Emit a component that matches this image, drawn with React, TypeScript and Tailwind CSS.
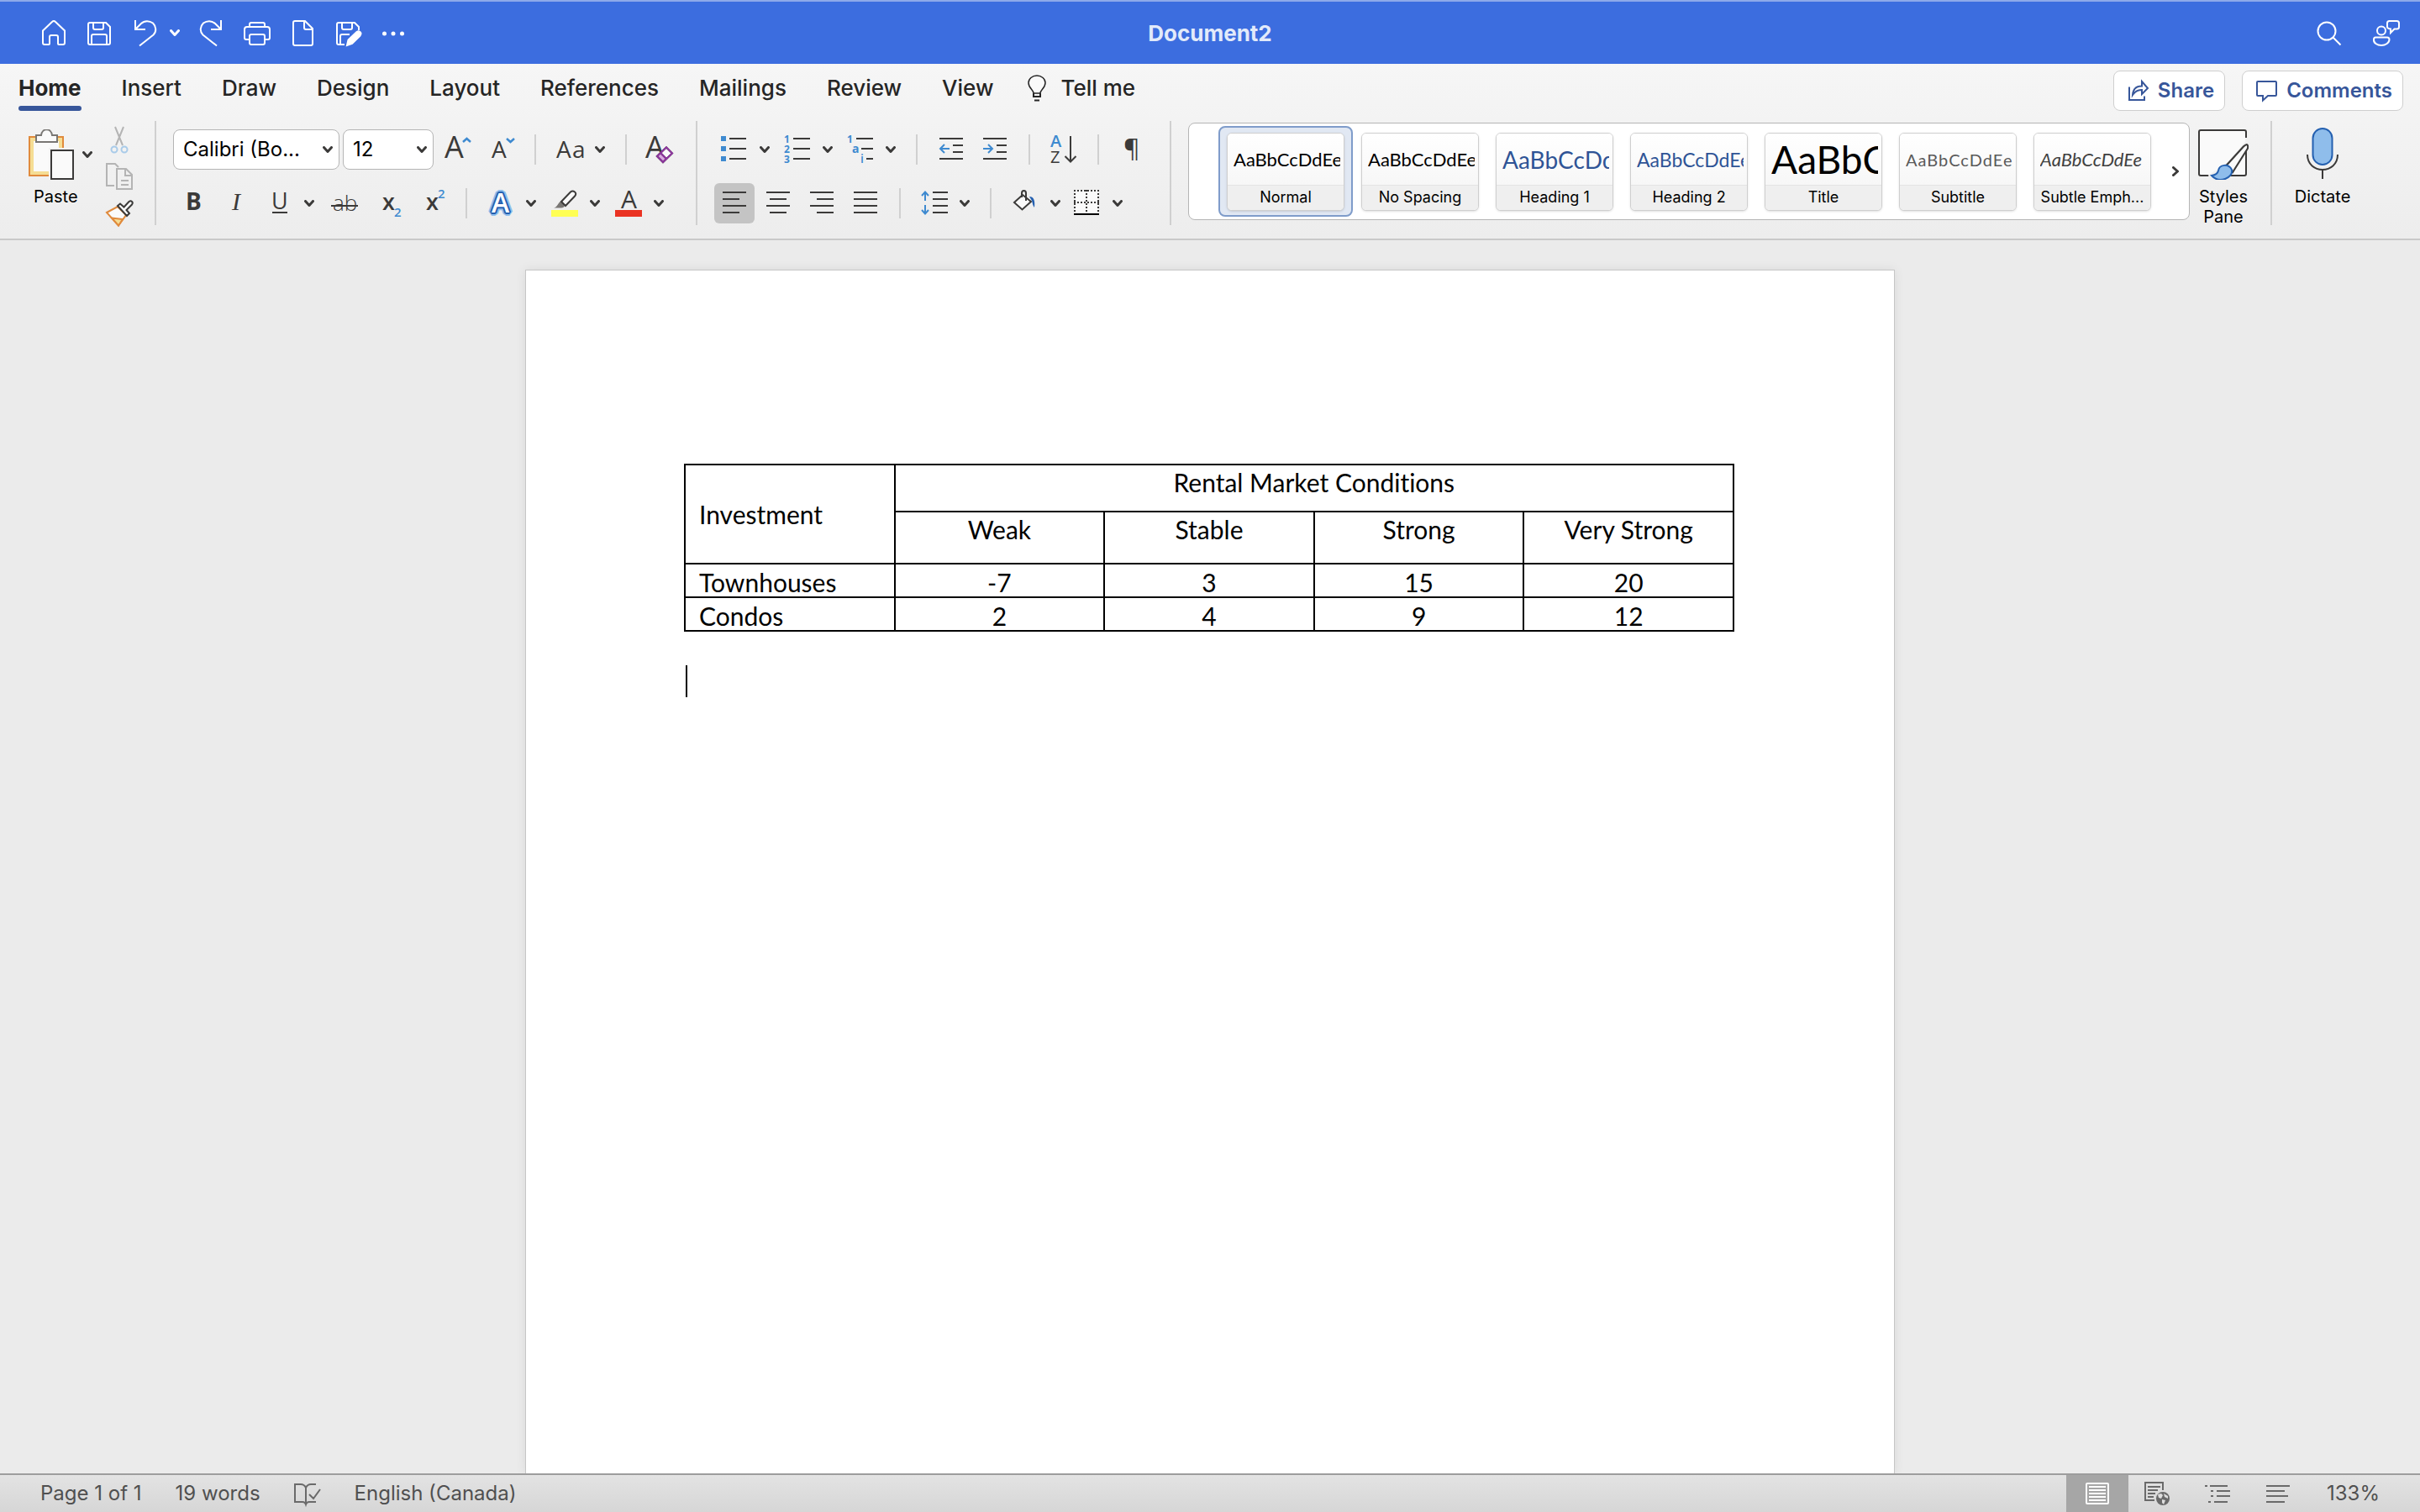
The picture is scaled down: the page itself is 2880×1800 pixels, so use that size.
import { clsx } from "clsx";
import { ReactNode, useState } from "react";

const TABS = [
  "Home",
  "Insert",
  "Draw",
  "Design",
  "Layout",
  "References",
  "Mailings",
  "Review",
  "View",
];

const STYLES = [
  { label: "Normal", sample: "text-[22px] text-black" },
  { label: "No Spacing", sample: "text-[22px] text-black" },
  { label: "Heading 1", sample: "text-[28px] text-[#2f5496]" },
  { label: "Heading 2", sample: "text-[23px] text-[#2f5496]" },
  { label: "Title", sample: "text-[46px] text-black" },
  { label: "Subtitle", sample: "text-[20px] tracking-wider text-[#5a5a5a]" },
  { label: "Subtle Emph...", sample: "text-[22px] italic text-[#404040]" },
];

const CONDITIONS = ["Weak", "Stable", "Strong", "Very Strong"];

const INVESTMENTS = [
  { name: "Townhouses", values: [-7, 3, 15, 20] },
  { name: "Condos", values: [2, 4, 9, 12] },
];

interface IconProps {
  children: ReactNode;
  className?: string;
}

function Icon({ children, className }: IconProps) {
  return (
    <svg
      aria-hidden="true"
      className={clsx("size-8 shrink-0 overflow-visible", className)}
      fill="none"
      stroke="currentColor"
      strokeWidth="2"
      viewBox="0 0 32 32"
    >
      {children}
    </svg>
  );
}

interface GlyphProps {
  children: string;
  className?: string;
  fill?: string;
  size: number;
  x: number;
  y: number;
}

// Letters that are part of an icon
function Glyph({ children, className, fill = "#3b3a39", size, x, y }: GlyphProps) {
  return (
    <text
      className={clsx("font-['Open_Sans',sans-serif]", className)}
      fill={fill}
      fontSize={size}
      stroke="none"
      x={x}
      y={y}
    >
      {children}
    </text>
  );
}

function Chevron({ className }: { className?: string }) {
  return (
    <svg
      aria-hidden="true"
      className={clsx("h-2 w-3 shrink-0", className)}
      fill="none"
      stroke="currentColor"
      strokeLinecap="round"
      strokeLinejoin="round"
      strokeWidth="3"
      viewBox="0 0 12 8"
    >
      <path d="M1.500 1.500 6 6.500l4.500-5" />
    </svg>
  );
}

function Tool({ children, label }: { children: ReactNode; label: string }) {
  return (
    <button aria-label={label} className="flex shrink-0 items-center" type="button">
      <Icon>{children}</Icon>
    </button>
  );
}

function MenuTool({ children, label }: { children: ReactNode; label: string }) {
  return (
    <button
      aria-label={label}
      className="flex shrink-0 items-center gap-3.5"
      type="button"
    >
      <Icon>{children}</Icon>
      <Chevron />
    </button>
  );
}

function Divider() {
  return <div className="mx-6 h-9 w-0.5 shrink-0 bg-[#d0d0d0]" />;
}

function GroupDivider() {
  return <div className="h-[124px] w-0.5 shrink-0 bg-[#d0d0d0]" />;
}

function TitleBar() {
  return (
    <header className="grid h-[76px] shrink-0 grid-cols-[1fr_auto_1fr] items-center border-t-2 border-[#8ea9ea] bg-[#3c6ddf] text-white">
      <div className="flex items-center gap-[22px] pl-12">
        <Tool label="Home">
          <path d="M3 13.500 14 3q2-2 4 0l11 10.500V28q0 2-2 2h-5q-1 0-1-1v-8q0-2-2-2h-6q-2 0-2 2v8q0 1-1 1H5q-2 0-2-2z" />
        </Tool>
        <Tool label="Save">
          <path d="M5 4h19l5 5v19q0 2-2 2H5q-2 0-2-2V6q0-2 2-2z" />
          <path d="M9 4v6q0 2 2 2h8q2 0 2-2V4M7 30V20q0-2 2-2h14q2 0 2 2v10" />
        </Tool>
        <MenuTool label="Undo">
          <path d="M5 1v11h12M5 12l7-7c4-4 10-3.500 14-.5 4 4 4.500 10 .5 14L10 31.500" />
        </MenuTool>
        <Tool label="Redo">
          <path
            d="M5 1v11h12M5 12l7-7c4-4 10-3.500 14-.5 4 4 4.500 10 .5 14L10 31.500"
            transform="matrix(-1 0 0 1 32 0)"
          />
        </Tool>
        <Tool label="Print">
          <path d="M7 9V6q0-2 2-2h14q2 0 2 2v3" />
          <path d="M7 24H3q-2 0-2-2V12q0-3 3-3h24q3 0 3 3v10q0 2-2 2h-4" />
          <rect height="12" rx="2" width="18" x="7" y="18" />
        </Tool>
        <Tool label="New document">
          <path d="M7 2h12l9 9v18q0 2-2 2H7q-2 0-2-2V4q0-2 2-2z" />
          <path d="M18 2v8q0 2 2 2h8" />
        </Tool>
        <Tool label="Save as">
          <path d="M12 30H5q-2 0-2-2V6q0-2 2-2h19l5 5v4" />
          <path d="M9 4v6q0 2 2 2h8q2 0 2-2V4M7 30V20q0-2 2-2h9" />
          <path
            d="m15 31 1.500-6.500L26.500 15q2-1.500 4 0t0 4.500L21 29z"
            fill="currentColor"
          />
        </Tool>
        <Tool label="More commands">
          <g fill="currentColor" stroke="none">
            <circle cx="5.500" cy="17" r="2.500" />
            <circle cx="16" cy="17" r="2.500" />
            <circle cx="26.500" cy="17" r="2.500" />
          </g>
        </Tool>
      </div>
      <h1 className="pt-0.5 text-[26px] leading-8 font-bold text-[#e2eafa]">
        Document2
      </h1>
      <div className="flex items-center justify-end gap-9 pr-6">
        <Tool label="Search">
          <circle cx="13" cy="14" r="10.500" />
          <path d="m20.500 21.500 9 9" />
        </Tool>
        <Tool label="Account">
          <circle cx="10" cy="13.500" r="5" />
          <path d="M3 21.500h14q2.500 0 2.500 2.500c0 4-4.500 7-9.500 7S.5 28 1 24q0-2.500 2-2.500z" />
          <path d="M19.500 2h9q2.500 0 2.500 2.500V9q0 2.500-2.500 2.500h-3L21 16v-4.500q-4-.5-4-2.500V4.500Q17 2 19.500 2z" />
        </Tool>
      </div>
    </header>
  );
}

function Tabs() {
  const [active, setActive] = useState("Home");

  return (
    <div className="flex h-16 items-start justify-between pr-5 pl-[22px]">
      <nav className="flex h-14 gap-12">
        {TABS.map((tab) => (
          <button
            className={clsx(
              "relative pt-0.5 text-[26px] leading-8 text-[#252525]",
              tab === active ? "font-bold" : "font-medium",
            )}
            key={tab}
            onClick={() => setActive(tab)}
            type="button"
          >
            {tab}
            {tab === active && (
              <span className="absolute inset-x-0 bottom-0 h-1.5 rounded-full bg-[#37569a]" />
            )}
          </button>
        ))}
        <button
          className="-ml-3 flex items-center gap-3 pt-0.5 text-[26px] leading-8 font-medium text-[#252525]"
          type="button"
        >
          <Icon>
            <path
              d="M12 22c0-4-6-6-6-12.500a10 8.500 0 0 1 20 0C26 16 20 18 20 22z"
              fill="#fafafa"
              strokeWidth="1.500"
            />
            <path d="M12 22v4h8v-4M13 30.500h6" />
          </Icon>
          Tell me
        </button>
      </nav>
      <div className="flex h-14 items-end gap-5">
        <button
          className="flex h-12 items-center gap-2 rounded-lg border border-[#cfcfcf] bg-white px-3 text-[24px] font-semibold text-[#37569a]"
          type="button"
        >
          <Icon>
            <path d="M6 11.500V27h18v-4.500M10 21c.5-7 4.500-10.500 11-10.500V5l7 8-7 7v-5c-4.500 0-8 1.500-11 6z" />
          </Icon>
          Share
        </button>
        <button
          className="flex h-12 items-center gap-2 rounded-lg border border-[#cfcfcf] bg-white px-3 text-[24px] font-semibold text-[#37569a]"
          type="button"
        >
          <Icon>
            <path d="M6 5h21q1 0 1 1v15q0 1-1 1h-9l-6 5.500V22H6q-1 0-1-1V6q0-1 1-1z" />
          </Icon>
          Comments
        </button>
      </div>
    </div>
  );
}

function ClipboardGroup() {
  return (
    <div className="flex shrink-0 gap-4 pr-[26px] pl-[34px]">
      <button className="flex flex-col items-start gap-2 pt-2.5" type="button">
        <span className="flex items-center gap-2.5">
          <svg
            aria-hidden="true"
            className="h-[60px] w-[54px]"
            fill="none"
            strokeWidth="2"
            viewBox="0 0 54 60"
          >
            <path d="M1 9h40v46H1z" fill="#f5dd94" stroke="#e08a3c" />
            <path d="M6 14h30v36H6z" fill="#fafafa" />
            <path
              d="M9 7h6c1-9 12-9 13 0h6v8H9z"
              fill="#fafafa"
              stroke="#797774"
            />
            <path d="M24 22h30v38H24z" fill="#f2f2f2" />
            <path d="M27 25h26v34H27z" fill="#fafafa" stroke="#3b3a39" />
          </svg>
          <Chevron />
        </span>
        <span className="pl-1.5 text-[20px] leading-6 text-black">Paste</span>
      </button>
      <div className="flex flex-col gap-3 pt-1.5">
        <Tool label="Cut">
          <g stroke="#b4b4b4">
            <path d="m11 1 9 22M21 1l-9 22" />
          </g>
          <g stroke="#a9cbe9">
            <circle cx="10" cy="28" r="3.500" />
            <circle cx="22" cy="28" r="3.500" />
          </g>
        </Tool>
        <Tool label="Copy">
          <g stroke="#b4b4b4">
            <path d="M10 27H1V1h10l4 4" />
            <path d="M13 7h11l7 7v17H13zM23 7v8h8M18 21h9M18 26h9" />
          </g>
        </Tool>
        <Tool label="Format painter">
          <path d="M1 15 14 8l10 10-9 12.500z" fill="#fafafa" stroke="#e08a3c" />
          <path d="m7 21.500 13 1.500-5 7.500z" fill="#f5dd94" stroke="#e08a3c" />
          <path
            d="m14 7 3-2.500 4.500 4 6-6.500q2-1.500 3.500 0t0 3.500l-6.500 6.500 3.500 4-3 3z"
            fill="#fafafa"
            stroke="#3b3a39"
          />
        </Tool>
      </div>
    </div>
  );
}

interface PickerProps {
  className: string;
  label: string;
  value: string;
}

function Picker({ className, label, value }: PickerProps) {
  return (
    <label className={clsx("relative flex items-center", className)}>
      <span className="sr-only">{label}</span>
      <select
        className="h-12 w-full appearance-none rounded-lg border border-[#b5b5b5] bg-white px-[11px] text-[24px] text-black"
        defaultValue={value}
      >
        <option>{value}</option>
      </select>
      <Chevron className="pointer-events-none absolute right-2" />
    </label>
  );
}

function FontGroup() {
  return (
    <div className="flex shrink-0 flex-col gap-4 pt-2.5 pr-[26px] pl-5">
      <div className="flex h-12 items-center">
        <div className="flex gap-1 pr-3">
          <Picker className="w-[198px]" label="Font" value="Calibri (Bo..." />
          <Picker className="w-[108px]" label="Font size" value="12" />
        </div>
        <div className="flex gap-5">
          <Tool label="Increase font size">
            <Glyph size={36} x={1} y={26}>
              A
            </Glyph>
            <path d="m23 7 4.500-4L32 7" stroke="#3e8ad0" strokeWidth="2.500" />
          </Tool>
          <Tool label="Decrease font size">
            <Glyph size={28} x={5} y={26}>
              A
            </Glyph>
            <path d="m23 3 4.500 4L32 3" stroke="#3e8ad0" strokeWidth="2.500" />
          </Tool>
        </div>
        <Divider />
        <MenuTool label="Change case">
          <Glyph size={28} x={0} y={26}>
            A
          </Glyph>
          <Glyph size={28} x={19} y={26}>
            a
          </Glyph>
        </MenuTool>
        <Divider />
        <Tool label="Clear formatting">
          <Glyph size={36} x={-2} y={26}>
            A
          </Glyph>
          <path
            d="M14 25 24 15l6 6-10 9z"
            fill="#fafafa"
            stroke="#f1f1f1"
            strokeWidth="4"
          />
          <path d="m12 24 11-10.500 7 7L19 31z" fill="#fafafa" />
          <path d="m12 24 4-4 7 7-4 4z" fill="#d9a8e0" />
          <path d="m12 24 11-10.500 7 7L19 31zM16 20l7 7" stroke="#8f36a0" />
        </Tool>
      </div>
      <div className="flex h-12 items-center pl-1.5">
        <div className="flex items-center gap-5">
          <Tool label="Bold">
            <Glyph className="font-bold" size={28} x={9} y={24}>
              B
            </Glyph>
          </Tool>
          <Tool label="Italic">
            <text
              className="font-['Liberation_Serif',serif] italic"
              fill="#3b3a39"
              fontSize="30"
              stroke="none"
              x="12"
              y="24"
            >
              I
            </text>
          </Tool>
          <MenuTool label="Underline">
            <Glyph size={27} x={7} y={23}>
              U
            </Glyph>
            <path d="M8 27h18" stroke="#3b3a39" />
          </MenuTool>
          <Tool label="Strikethrough">
            <Glyph className="font-light" size={26} x={2} y={25}>
              ab
            </Glyph>
            <path d="M0 19h32" stroke="#3b3a39" />
          </Tool>
          <Tool label="Subscript">
            <Glyph className="font-semibold" size={27} x={9} y={24}>
              x
            </Glyph>
            <Glyph className="font-semibold" fill="#3e8ad0" size={15} x={23} y={32}>
              2
            </Glyph>
          </Tool>
          <Tool label="Superscript">
            <Glyph className="font-semibold" size={27} x={9} y={24}>
              x
            </Glyph>
            <Glyph className="font-semibold" fill="#3e8ad0" size={15} x={23} y={10}>
              2
            </Glyph>
          </Tool>
        </div>
        <Divider />
        <div className="flex items-center gap-[18px]">
          <MenuTool label="Text effects">
            <text
              className="font-['Open_Sans',sans-serif] font-semibold"
              fill="#fff"
              fontSize="32"
              stroke="#8fbdeb"
              strokeLinejoin="bevel"
              strokeWidth="8"
              x="5"
              y="27"
            >
              A
            </text>
            <text
              className="font-['Open_Sans',sans-serif] font-semibold"
              fill="#fff"
              fontSize="32"
              stroke="#2460b0"
              strokeLinejoin="bevel"
              strokeWidth="4"
              x="5"
              y="27"
            >
              A
            </text>
            <Glyph className="font-semibold" fill="#fff" size={32} x={5} y={27}>
              A
            </Glyph>
          </MenuTool>
          <MenuTool label="Highlight colour">
            <path d="M3 21.500c5-1 5-7 9-8l4 4c0 3-2 4-4 4z" fill="#797774" stroke="none" />
            <path
              d="m12 14 11-11.500q2.500-2 5 0t0 5L17 19z"
              fill="#fafafa"
              stroke="#3b3a39"
            />
            <path d="M0 24h32v8H0z" fill="#ffff54" stroke="none" />
          </MenuTool>
          <MenuTool label="Font colour">
            <Glyph size={30} x={7} y={22}>
              A
            </Glyph>
            <path d="M0 24h32v8H0z" fill="#ea3323" stroke="none" />
          </MenuTool>
        </div>
      </div>
    </div>
  );
}

const ALIGNMENTS = [
  { label: "Align left", path: "M2 7h28M2 15h20M2 23h28M2 31h20" },
  { label: "Centre", path: "M2 7h28M6 15h20M2 23h28M6 31h20" },
  { label: "Align right", path: "M2 7h28M10 15h20M2 23h28M10 31h20" },
  { label: "Justify", path: "M2 7h28M2 15h28M2 23h28M2 31h28" },
];

function ParagraphGroup() {
  const [alignment, setAlignment] = useState("Align left");

  return (
    <div className="flex shrink-0 flex-col gap-4 pt-2.5 pr-7 pl-5">
      <div className="flex h-12 items-center pl-2">
        <div className="flex items-center gap-[17px]">
          <MenuTool label="Bulleted list">
            <path
              d="M0 0h6v6H0zM0 12h6v6H0zM0 24h6v6H0z"
              fill="#3e8ad0"
              stroke="none"
            />
            <path d="M10 3h20M10 15h20M10 27h20" />
          </MenuTool>
          <MenuTool label="Numbered list">
            <Glyph className="font-bold" fill="#3e8ad0" size={12} x={0} y={8}>
              1
            </Glyph>
            <Glyph className="font-bold" fill="#3e8ad0" size={12} x={0} y={20}>
              2
            </Glyph>
            <Glyph className="font-bold" fill="#3e8ad0" size={12} x={0} y={32}>
              3
            </Glyph>
            <path d="M11 3h20M11 15h20M11 27h20" />
          </MenuTool>
          <MenuTool label="Multilevel list">
            <Glyph className="font-bold" fill="#3e8ad0" size={12} x={0} y={8}>
              1
            </Glyph>
            <Glyph className="font-bold" fill="#3e8ad0" size={14} x={6} y={20}>
              a
            </Glyph>
            <Glyph className="font-semibold" fill="#3e8ad0" size={14} x={16} y={32}>
              i
            </Glyph>
            <path d="M11 3h20M17 15h14M23 27h8" />
          </MenuTool>
        </div>
        <Divider />
        <div className="flex items-center gap-5">
          <Tool label="Decrease indent">
            <path d="M2 3h28M18 11h12M18 19h12M2 27h28" />
            <path d="M14 15H3M8 10l-5 5 5 5" stroke="#3e8ad0" />
          </Tool>
          <Tool label="Increase indent">
            <path d="M2 3h28M18 11h12M18 19h12M2 27h28" />
            <path d="M2 15h11M8 10l5 5-5 5" stroke="#3e8ad0" />
          </Tool>
        </div>
        <Divider />
        <Tool label="Sort">
          <Glyph className="font-semibold" fill="#3e8ad0" size={20} x={0} y={13}>
            A
          </Glyph>
          <Glyph size={20} x={0} y={32}>
            Z
          </Glyph>
          <path d="M24 0v30M17.500 24l6.500 6.500 6.500-6.500" />
        </Tool>
        <Divider />
        <Tool label="Show formatting marks">
          <Glyph size={30} x={5} y={25}>
            ¶
          </Glyph>
        </Tool>
      </div>
      <div className="flex h-12 items-center">
        <div className="-mr-2 flex gap-1">
          {ALIGNMENTS.map(({ label, path }) => (
            <button
              aria-label={label}
              aria-pressed={label === alignment}
              className="flex size-12 items-center justify-center rounded-md aria-pressed:bg-[#c4c4c4]"
              key={label}
              onClick={() => setAlignment(label)}
              type="button"
            >
              <Icon>
                <path d={path} transform="translate(0 -4)" />
              </Icon>
            </button>
          ))}
        </div>
        <Divider />
        <MenuTool label="Line spacing">
          <path d="M14 3h18M14 11h18M14 19h18M14 27h18" />
          <path
            d="M5 13V3M1 7l4-4.500L9 7M5 18v10M1 24l4 4.500L9 24"
            stroke="#3e8ad0"
          />
        </MenuTool>
        <Divider />
        <div className="flex items-center gap-4">
          <MenuTool label="Shading">
            <path d="M13 6 3 15l9.500 8.500L23 14z" fill="#fafafa" />
            <path d="M12 9V4c0-4 5-4 5 0v9" />
            <path d="M21 8c5 0 7 4 6 13-2-2-2-5-3-8z" fill="#2460b0" stroke="none" />
          </MenuTool>
          <MenuTool label="Borders">
            <path d="M1 1h28v26H1z" fill="#fafafa" stroke="none" />
            <path
              d="M0 1h30M0 15h30M1 0v27M15 0v27M29 0v27"
              strokeDasharray="2 2"
            />
            <path d="M0 29h30" stroke="#000" />
          </MenuTool>
        </div>
      </div>
    </div>
  );
}

function StyleGallery() {
  const [selected, setSelected] = useState("Normal");

  return (
    <div className="mt-0.5 ml-5 flex h-[116px] min-w-0 flex-1 items-center rounded-lg border border-[#b5b5b5] bg-white pl-[35px]">
      <div className="flex min-w-0 flex-1 overflow-hidden">
        {STYLES.map(({ label, sample }) => (
          <button
            aria-pressed={label === selected}
            className="h-[108px] w-40 shrink-0 rounded-lg border-2 border-transparent px-2 pt-1.5 pb-[5px] aria-pressed:border-[#7f9cca] aria-pressed:bg-[#e1e8f3]"
            key={label}
            onClick={() => setSelected(label)}
            type="button"
          >
            <span className="flex h-full flex-col overflow-hidden rounded-md border border-[#cfcfcf] bg-white shadow-sm">
              <span className="flex flex-1 items-center bg-linear-to-b from-white to-[#f7f7f7] pr-1 pl-[7px]">
                <span
                  className={clsx(
                    "w-full overflow-hidden text-left font-['Lato',sans-serif] leading-[60px] whitespace-nowrap",
                    sample,
                  )}
                >
                  AaBbCcDdEe
                </span>
              </span>
              <span className="h-[30px] border-t border-[#e4e4e4] bg-[#efefef] text-center text-[18px] leading-7 text-black">
                {label}
              </span>
            </span>
          </button>
        ))}
      </div>
      <button aria-label="More styles" className="pr-2.5" type="button">
        <Chevron className="-rotate-90" />
      </button>
    </div>
  );
}

function Ribbon() {
  return (
    <section className="shrink-0 border-b-2 border-[#c9c9c9] bg-linear-to-b from-[#f6f6f6] to-[#ededed] text-[#3b3a39]">
      <Tabs />
      <div className="flex items-start pt-1 pb-3.5">
        <ClipboardGroup />
        <GroupDivider />
        <FontGroup />
        <GroupDivider />
        <ParagraphGroup />
        <GroupDivider />
        <StyleGallery />
        <button
          className="mr-4 flex w-20 shrink-0 flex-col items-center gap-2 pt-2 text-[20px] leading-6 text-black"
          type="button"
        >
          <svg
            aria-hidden="true"
            className="h-[62px] w-16"
            fill="none"
            stroke="#3b3a39"
            strokeWidth="2"
            viewBox="0 0 64 62"
          >
            <path d="M5 3h52q2 0 2 2v50q0 2-2 2H5q-2 0-2-2V5q0-2 2-2z" fill="#fafafa" />
            <path d="M16 60 40 44 62 18v-6" stroke="#f1f1f1" strokeWidth="8" />
            <path
              d="M34 46 56 24q6-5 5 2L43 52z"
              fill="#fafafa"
              transform="matrix(1 0 0 1.100 0 -4)"
            />
            <path
              d="M18 57q7-1 8-6c1-7 12-9 16-1 2 10-15 17-24 7z"
              fill="#8fbdeb"
              stroke="#2460b0"
            />
          </svg>
          Styles Pane
        </button>
        <GroupDivider />
        <button
          className="mr-14 flex w-[120px] shrink-0 flex-col items-center gap-2 pt-2 text-[20px] leading-6 text-black"
          type="button"
        >
          <svg
            aria-hidden="true"
            className="h-[62px] w-10"
            fill="none"
            stroke="#3b3a39"
            strokeWidth="2"
            viewBox="0 0 40 62"
          >
            <rect
              fill="#8fbdeb"
              height="43"
              rx="11.500"
              stroke="#2460b0"
              width="23"
              x="8.500"
              y="1"
            />
            <path d="M2 32c0 24 36 24 36 0M20 50v11" />
          </svg>
          Dictate
        </button>
      </div>
    </section>
  );
}

function Page() {
  return (
    <main className="flex min-h-0 flex-1 justify-center overflow-hidden bg-[#ebebeb] pt-[35px]">
      <article className="w-full max-w-[1630px] border border-b-0 border-[#c6c6c6] bg-white pt-[230px] pr-[190px] pl-[188px] font-['Lato',sans-serif] text-[30px] leading-10 text-black [font-variant-ligatures:none] shadow-[0_0_12px_rgba(0,0,0,0.08)]">
        <table className="w-full table-fixed border-collapse border-2 border-black">
          <thead>
            <tr className="h-14">
              <th
                className="border-2 border-black px-4 text-left align-middle font-normal"
                rowSpan={2}
                scope="col"
              >
                Investment
              </th>
              <th
                className="border-2 border-black align-top font-normal"
                colSpan={4}
                scope="colgroup"
              >
                Rental Market Conditions
              </th>
            </tr>
            <tr className="h-[62px]">
              {CONDITIONS.map((condition) => (
                <th
                  className="border-2 border-black align-top font-normal"
                  key={condition}
                  scope="col"
                >
                  {condition}
                </th>
              ))}
            </tr>
          </thead>
          <tbody>
            {INVESTMENTS.map(({ name, values }) => (
              <tr className="h-10" key={name}>
                <th
                  className="border-2 border-black px-4 pt-1 text-left leading-[34px] font-normal"
                  scope="row"
                >
                  {name}
                </th>
                {values.map((value) => (
                  <td
                    className="border-2 border-black pt-1 text-center leading-[34px]"
                    key={value}
                  >
                    {value}
                  </td>
                ))}
              </tr>
            ))}
          </tbody>
        </table>
        <div className="mt-10 ml-0.5 h-[38px] w-0.5 bg-black" />
      </article>
    </main>
  );
}

function StatusBar() {
  return (
    <footer className="flex h-[46px] shrink-0 items-center justify-between border-t-2 border-[#9d9d9d] bg-linear-to-b from-[#e3e3e3] to-[#d6d6d6] pr-12 pl-12 text-[24px] leading-8 text-[#505050]">
      <div className="flex items-center gap-10">
        <span>Page 1 of 1</span>
        <span>19 words</span>
        <button aria-label="Proofing" type="button">
          <Icon className="text-[#6a6a6a]">
            <path d="M14 9q-2-4-6-4H1v21h9q3 0 4 3 1-3 4-3h8M14 9v20M14 9q2-4 6-4h6M18 17l5 5 8-11" />
          </Icon>
        </button>
        <button type="button">English (Canada)</button>
      </div>
      <div className="flex h-full items-center gap-[42px]">
        <div className="flex h-full items-center gap-[18px] text-[#6a6a6a]">
          <button
            aria-label="Print layout"
            className="flex h-full w-[74px] items-center justify-center bg-[#a6a6a6] text-white"
            type="button"
          >
            <Icon>
              <rect height="24" rx="1" width="26" x="3" y="4" />
              <path d="M6 8h20M6 12h20M6 16h20M6 20h20M6 24h20" />
            </Icon>
          </button>
          <div className="flex items-center gap-10">
            <Tool label="Web layout">
              <path d="M13 24H2V3h21v9M5 8h15M5 12h12M5 16h9M5 20h7" />
              <circle cx="23" cy="22" fill="#6a6a6a" r="8" stroke="none" />
              <path
                d="m17 17 4-1 2 2-2 4-3-1zM24 16l5 3v3l-4-2zM22 23l4 1-2 5-2-2z"
                fill="#dedede"
                stroke="none"
              />
            </Tool>
            <Tool label="Outline">
              <path d="M1 7h3M7 7h21M8 13h3M15 13h16M8 19h3M15 19h16M5 26h3M12 26h16" />
            </Tool>
            <Tool label="Draft">
              <path d="M2 7h28M2 13h22M2 19h26M2 26h22" />
            </Tool>
          </div>
        </div>
        <span>133%</span>
      </div>
    </footer>
  );
}

export default function App() {
  return (
    <div className="flex h-screen flex-col overflow-hidden font-['Inter',sans-serif]">
      <TitleBar />
      <Ribbon />
      <Page />
      <StatusBar />
    </div>
  );
}
